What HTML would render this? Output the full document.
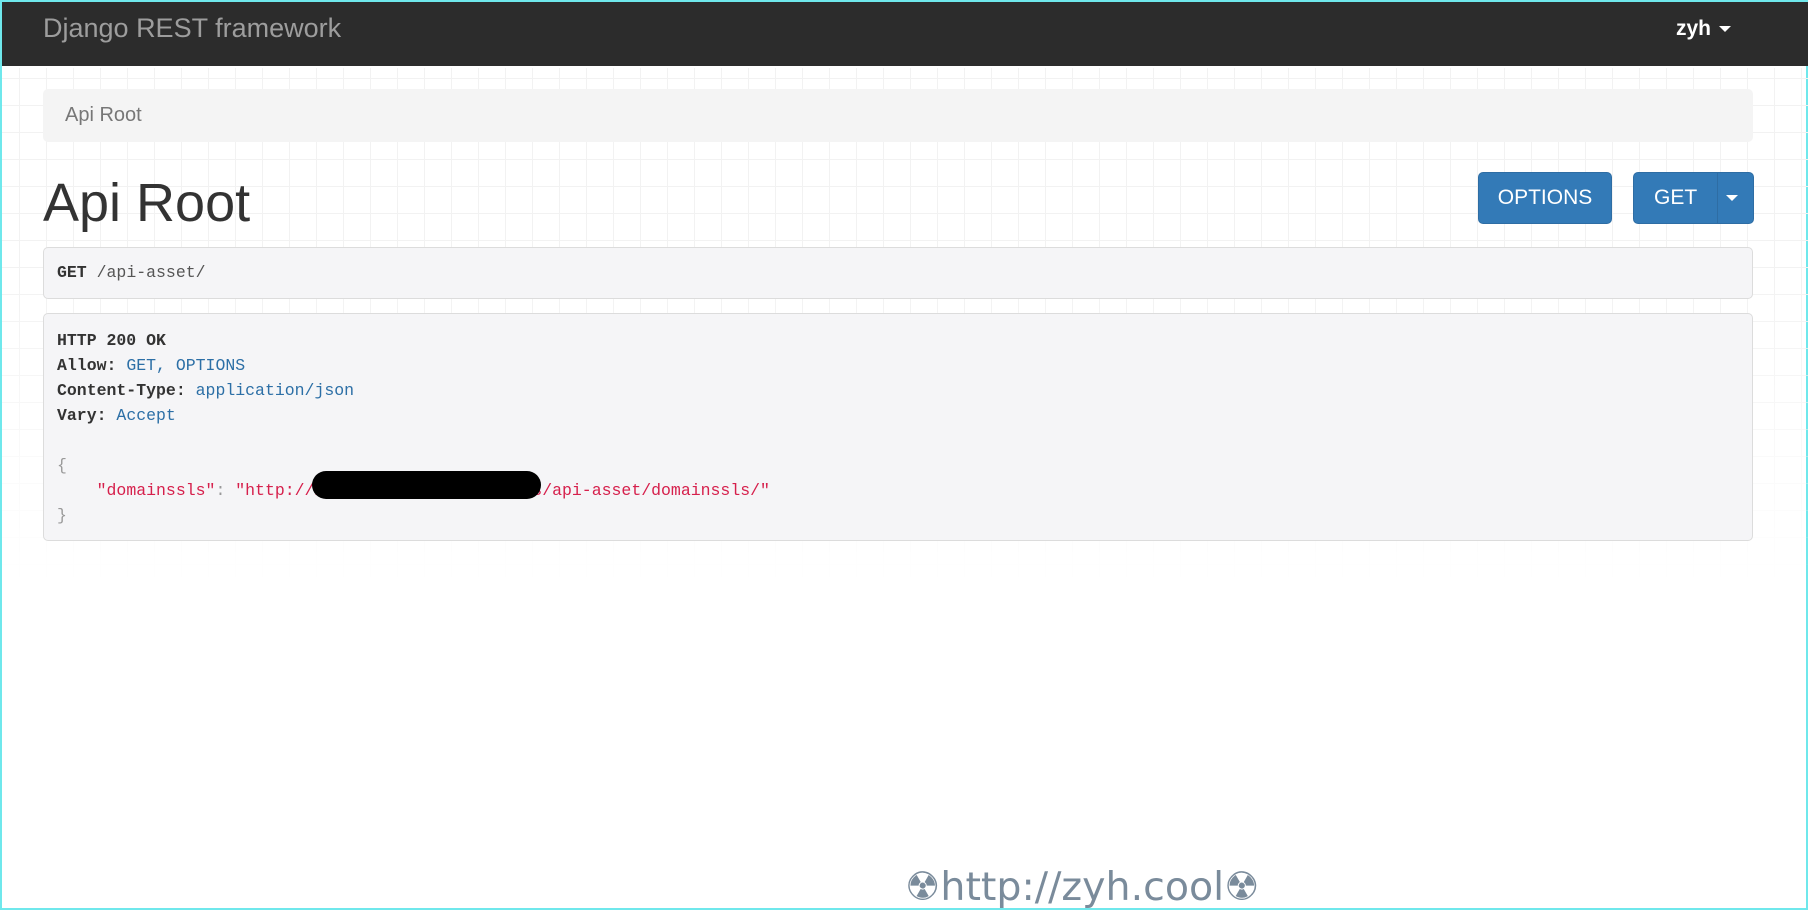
<!DOCTYPE html>
<html><head><meta charset="utf-8"><style>
*{box-sizing:border-box;margin:0;padding:0}
html,body{width:1808px;height:910px;overflow:hidden;background:#fff}
body{position:relative;font-family:"Liberation Sans",Arial,sans-serif;border:2px solid #6fe8ec;border-bottom:none}
.grid{position:absolute;left:0;top:66px;width:1808px;height:520px;
background-image:linear-gradient(#f2f2f2 1px,transparent 1px),linear-gradient(90deg,#f2f2f2 1px,transparent 1px);
background-size:27px 27px;background-position:-10px 10px;
-webkit-mask-image:linear-gradient(#000 0%,#000 40%,transparent 100%);mask-image:linear-gradient(#000 0%,#000 40%,transparent 100%)}
.nav{position:absolute;left:0;top:0;width:1808px;height:64px;background:#2c2c2c}
.brand{position:absolute;left:41px;top:11px;font-size:27px;color:#9d9d9d}
.user{position:absolute;left:1674px;top:15px;font-size:21px;color:#fff;font-weight:bold}
.caret{display:inline-block;width:0;height:0;border-left:6px solid transparent;border-right:6px solid transparent;border-top:6px solid currentColor;vertical-align:middle;margin-left:8px}
.bc{position:absolute;left:41px;top:87px;width:1710px;height:53px;background:#f4f4f4;border-radius:5px;font-size:20px;color:#777;padding:15px 0 0 22px}
h1{position:absolute;left:41px;top:174px;font-size:54px;font-weight:normal;color:#333;line-height:1}
.btn{position:absolute;top:170px;height:52px;background:#337ab7;border:1px solid #2e6da4;border-radius:5px;color:#fff;font-size:21px;text-align:center;line-height:50px}
.box{position:absolute;left:41px;width:1710px;background:#f5f5f7;border:1px solid #dcdcdc;border-radius:5px;font-family:"Liberation Mono","DejaVu Sans Mono",monospace;font-size:16.5px;color:#333}
b{font-weight:bold;color:#333}
.v{color:#2c6fa6}
.s{color:#d6204c}
.p{color:#999}
.line{height:25px;line-height:25px;white-space:pre}
.wm{position:absolute;left:903px;top:866px;font-size:39.5px;color:#7a8b9b;font-family:"DejaVu Sans",sans-serif;line-height:1;white-space:nowrap}
</style></head><body>
<div class="grid"></div>
<div class="nav"><div class="brand">Django REST framework</div><div class="user">zyh<span class="caret"></span></div></div>
<div class="bc">Api Root</div>
<h1>Api Root</h1>
<div class="btn" style="left:1476px;width:134px">OPTIONS</div>
<div class="btn" style="left:1631px;width:121px;text-align:left;padding-left:20px">GET<span style="position:absolute;left:83px;top:0;bottom:0;border-left:1px solid #2e6da4"></span><span class="caret" style="position:absolute;left:92px;top:22px;margin:0"></span></div>
<div class="box" style="top:245px;height:52px;padding:15px 0 0 13px"><b>GET</b> <span style="color:#555">/api-asset/</span></div>
<div class="box" style="top:311px;height:228px;padding:14px 0 0 13px">
<div class="line"><b>HTTP 200 OK</b></div>
<div class="line"><b>Allow:</b> <span class="v">GET, OPTIONS</span></div>
<div class="line"><b>Content-Type:</b> <span class="v">application/json</span></div>
<div class="line"><b>Vary:</b> <span class="v">Accept</span></div>
<div class="line"> </div>
<div class="line"><span class="p">{</span></div>
<div class="line">    <span class="s">"domainssls"</span><span class="p">: </span><span class="s">"http://xxxxxxxxxxxxxxxxxxxxxxs/api-asset/domainssls/"</span></div>
<div class="line"><span class="p">}</span></div>
<div style="position:absolute;left:268px;top:157px;width:229px;height:28px;background:#000;border-radius:14px"></div>
</div>
<div class="wm">☢http://zyh.cool☢</div>
<div style="position:absolute;left:0;bottom:0;width:1808px;height:2px;background:#6fe8ec"></div>
</body></html>
